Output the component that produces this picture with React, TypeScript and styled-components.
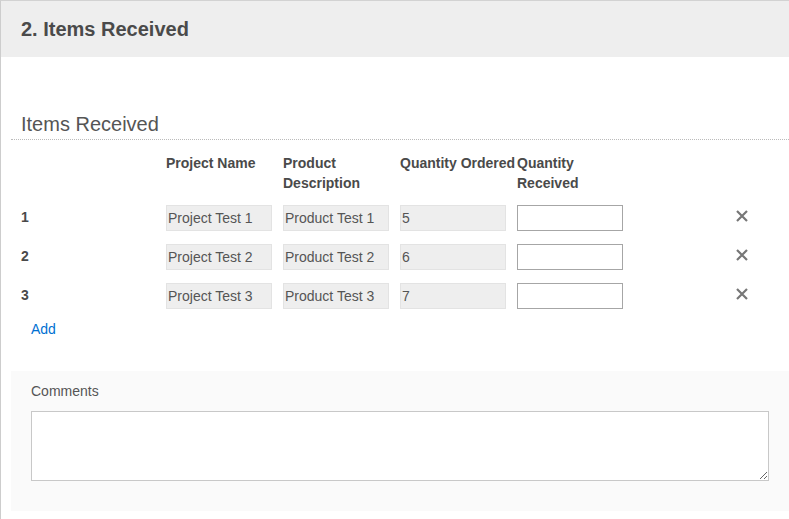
import React from "react";
import styled, { createGlobalStyle } from "styled-components";

type ItemRow = {
  id: number;
  projectName: string;
  productDescription: string;
  quantityOrdered: number;
};

const items: ItemRow[] = [
  { id: 1, projectName: "Project Test 1", productDescription: "Product Test 1", quantityOrdered: 5 },
  { id: 2, projectName: "Project Test 2", productDescription: "Product Test 2", quantityOrdered: 6 },
  { id: 3, projectName: "Project Test 3", productDescription: "Product Test 3", quantityOrdered: 7 },
];

const GlobalStyle = createGlobalStyle`
  html, body {
    margin: 0;
    padding: 0;
    background: #ffffff;
  }
  body {
    font-family: "Liberation Sans", Arial, sans-serif;
    font-size: 14px;
    color: #444444;
  }
`;

const StyledPanel = styled.section`
  border-top: 1px solid #d2d2d2;
  border-left: 1px solid #cdcdcd;
  min-height: 518px;
`;

const StyledPanelHeader = styled.header`
  height: 56px;
  display: flex;
  align-items: center;
  padding-left: 20px;
  background: #eeeeee;
`;

const StyledPanelTitle = styled.h2`
  margin: 0;
  font-size: 20px;
  line-height: 24px;
  font-weight: bold;
  color: #4a4a4a;
`;

const StyledPanelBody = styled.div`
  padding-left: 10px;
`;

const StyledSectionTitle = styled.h3`
  margin: 55px 0 0;
  padding: 0 0 3px 10px;
  font-size: 20px;
  line-height: 24px;
  font-weight: normal;
  color: #555555;
  border-bottom: 1px dotted #bbbbbb;
`;

const StyledGrid = styled.div`
  margin-top: 13px;
  padding-left: 10px;
`;

const StyledRow = styled.div<{ $header?: boolean }>`
  display: grid;
  grid-template-columns: 145px repeat(4, 117px) 114px;
  align-items: start;
  margin-bottom: ${(p) => (p.$header ? "12px" : "13px")};

  &:last-child {
    margin-bottom: 0;
  }
`;

const StyledHeaderCell = styled.div`
  font-weight: bold;
  line-height: 20px;
  color: #4a4a4a;
`;

const StyledRowNumber = styled.div`
  padding-top: 2px;
  font-weight: bold;
  line-height: 20px;
  color: #4a4a4a;
`;

const StyledInput = styled.input<{ $readOnly?: boolean }>`
  box-sizing: border-box;
  width: 106px;
  height: 26px;
  margin: 0;
  padding: 0 1px;
  font-family: "Liberation Sans", Arial, sans-serif;
  font-size: 14px;
  color: #555555;
  background: ${(p) => (p.$readOnly ? "#eeeeee" : "#ffffff")};
  border: 1px solid ${(p) => (p.$readOnly ? "#e3e3e3" : "#a6a6a6")};
  outline: none;
`;

const StyledRemoveButton = styled.button`
  justify-self: end;
  margin-top: 5px;
  padding: 0;
  width: 12px;
  height: 12px;
  border: none;
  background: none;
  cursor: pointer;
  display: flex;

  svg {
    display: block;
  }
`;

const StyledAddLink = styled.a`
  display: block;
  margin: 10px 0 0 20px;
  line-height: 20px;
  color: #0070d2;
  text-decoration: none;
  cursor: pointer;
`;

const StyledCommentsBox = styled.div`
  margin-top: 32px;
  padding: 10px 20px 30px;
  background: #fafafa;
`;

const StyledLabel = styled.label`
  display: block;
  line-height: 20px;
  color: #555555;
  margin-bottom: 10px;
`;

const StyledTextArea = styled.textarea`
  box-sizing: border-box;
  display: block;
  width: 100%;
  height: 70px;
  margin: 0;
  border: 1px solid #c8c8c8;
  background: #ffffff;
  font-family: "Liberation Sans", Arial, sans-serif;
  font-size: 14px;
  outline: none;
`;

const CloseIcon: React.FC = () => (
  <svg width="12" height="12" viewBox="0 0 12 12" aria-hidden="true">
    <path d="M1 1 L11 11 M11 1 L1 11" stroke="#777777" strokeWidth="2.2" strokeLinecap="butt" />
  </svg>
);

const ItemsReceived: React.FC = () => {
  return (
    <StyledPanel>
      <StyledPanelHeader>
        <StyledPanelTitle>2. Items Received</StyledPanelTitle>
      </StyledPanelHeader>
      <StyledPanelBody>
        <StyledSectionTitle>Items Received</StyledSectionTitle>
        <StyledGrid>
          <StyledRow $header>
            <div />
            <StyledHeaderCell>Project Name</StyledHeaderCell>
            <StyledHeaderCell>Product Description</StyledHeaderCell>
            <StyledHeaderCell>Quantity Ordered</StyledHeaderCell>
            <StyledHeaderCell>Quantity Received</StyledHeaderCell>
            <div />
          </StyledRow>
          {items.map((item) => (
            <StyledRow key={item.id}>
              <StyledRowNumber>{item.id}</StyledRowNumber>
              <StyledInput $readOnly readOnly value={item.projectName} />
              <StyledInput $readOnly readOnly value={item.productDescription} />
              <StyledInput $readOnly readOnly value={String(item.quantityOrdered)} />
              <StyledInput type="text" defaultValue="" />
              <StyledRemoveButton type="button" aria-label="Remove">
                <CloseIcon />
              </StyledRemoveButton>
            </StyledRow>
          ))}
        </StyledGrid>
        <StyledAddLink>Add</StyledAddLink>
        <StyledCommentsBox>
          <StyledLabel htmlFor="comments">Comments</StyledLabel>
          <StyledTextArea id="comments" />
        </StyledCommentsBox>
      </StyledPanelBody>
    </StyledPanel>
  );
};

const App: React.FC = () => (
  <>
    <GlobalStyle />
    <ItemsReceived />
  </>
);

export default App;
